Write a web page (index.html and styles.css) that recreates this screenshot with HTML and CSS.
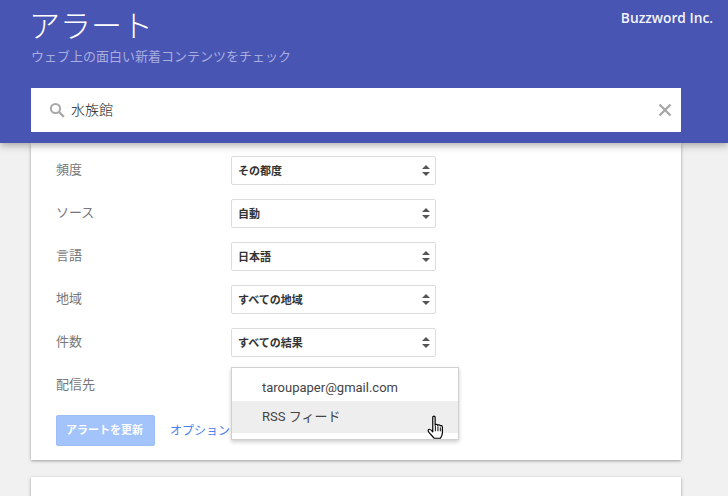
FILE: index.html
```html
<!DOCTYPE html>
<html lang="ja">
<head>
    <meta charset="UTF-8">
    <title>アラート</title>
    <link rel="stylesheet" href="styles.css">
</head>
<body>

    <header class="top-header">
        <div class="brand-row">
            <h1>アラート</h1>
            <span class="company">Buzzword Inc.</span>
        </div>
        <p class="subtitle">ウェブ上の面白い新着コンテンツをチェック</p>

        <div class="search-box">
            <svg class="search-icon" width="16" height="16" viewBox="0 0 16 16">
                <circle cx="6.5" cy="6.5" r="4.6" fill="none" stroke="#a8a8a8" stroke-width="2"/>
                <path d="M10 10l4.8 4.8" stroke="#a8a8a8" stroke-width="2.4" fill="none"/>
            </svg>
            <span class="search-text">水族館</span>
            <svg class="clear-icon" width="14" height="14" viewBox="0 0 14 14">
                <path d="M1.5 1.5l11 11M12.5 1.5l-11 11" stroke="#a8a8a8" stroke-width="2.4" fill="none"/>
            </svg>
        </div>
    </header>

    <main class="main-content">
        <section class="card options-card">
            <div class="form-row">
                <label>頻度</label>
                <div class="select-box">その都度<span class="arrows"></span></div>
            </div>
            <div class="form-row">
                <label>ソース</label>
                <div class="select-box">自動<span class="arrows"></span></div>
            </div>
            <div class="form-row">
                <label>言語</label>
                <div class="select-box">日本語<span class="arrows"></span></div>
            </div>
            <div class="form-row">
                <label>地域</label>
                <div class="select-box">すべての地域<span class="arrows"></span></div>
            </div>
            <div class="form-row">
                <label>件数</label>
                <div class="select-box">すべての結果<span class="arrows"></span></div>
            </div>
            <div class="form-row">
                <label>配信先</label>
                <div class="menu-anchor">
                    <ul class="dropdown-menu">
                        <li>taroupaper@gmail.com</li>
                        <li class="hover">RSS フィード</li>
                    </ul>
                    <!-- hand cursor over the open menu -->
                    <svg class="hand-cursor" width="18" height="24" viewBox="0 0 18 24">
                        <path d="M6 2.2c0-1.5 2.2-1.5 2.2 0v7.2c.3-1 2.2-1 2.4.2.4-.9 2.1-.8 2.3.5.5-.7 2-.5 2 .9v5.6c0 2.300-1 3.400-1.800 4.900H7.300L2.500 16c-1-1.300-1-2.200-.2-2.700.8-.5 1.800 0 3.700 2.300z" fill="#fff" stroke="#000" stroke-width="1.100" stroke-linejoin="round"/>
                        <path d="M8.400 10v5M10.800 10.500v4.500M13 11.500v3.500" stroke="#000" stroke-width="0.900" fill="none"/>
                    </svg>
                </div>
            </div>
            <div class="button-row">
                <button type="button">アラートを更新</button>
                <a href="#">オプションを表示しない</a>
            </div>
        </section>

        <section class="card next-card"></section>
    </main>

</body>
</html>
```

FILE: styles.css
```css
/* Basic Reset & Font */
body, html {
    margin: 0;
    padding: 0;
    height: 100%;
    overflow: hidden;
}

body {
    font-family: Roboto, "Noto Sans CJK JP", sans-serif;
    background-color: #f1f1f1;
    color: #333;
}

/* Header */
.top-header {
    position: relative;
    z-index: 2;
    height: 143px;
    padding: 0 15px 0 31px;
    box-sizing: border-box;
    background-color: #4855b3;
    box-shadow: 0 2px 8px rgba(0, 0, 0, 0.35);
}

.brand-row {
    display: flex;
    justify-content: space-between;
    height: 47px;
}

.top-header h1 {
    margin: 7px 0 0 -2px;
    font-size: 31px;
    line-height: 40px;
    font-weight: 300;
    color: #ffffff;
}

.company {
    margin: 10px 0 0;
    font-family: "Open Sans", sans-serif;
    font-size: 13.75px;
    line-height: 16px;
    font-weight: 600;
    color: #f2f3fb;
}

.subtitle {
    margin: 0;
    font-size: 13px;
    line-height: 20px;
    color: #a9ade0;
}

/* Search box */
.search-box {
    display: flex;
    align-items: center;
    height: 44px;
    margin: 21px 32px 0 0;
    padding: 0 9px 0 18px;
    background-color: #ffffff;
}

.search-text {
    flex-grow: 1;
    margin: -2px 0 0 6px;
    font-size: 14px;
    font-weight: 300;
    color: #222;
}

/* Cards */
.main-content {
    padding: 0 47px 0 31px;
}

.card {
    background-color: #ffffff;
    box-shadow: 0 1px 3px rgba(0, 0, 0, 0.35);
}

.options-card {
    height: 317px;
    padding: 13px 0 0 25px;
    box-sizing: border-box;
}

.next-card {
    height: 40px;
    margin-top: 17px;
}

/* Form rows */
.form-row {
    display: flex;
    height: 29px;
    margin-bottom: 14px;
}

.form-row label {
    width: 175px;
    font-size: 13px;
    line-height: 27px;
    color: #777;
}

.select-box {
    display: flex;
    align-items: center;
    justify-content: space-between;
    width: 205px;
    padding: 0 5px 2px 6px;
    box-sizing: border-box;
    border: 1px solid #dcdcdc;
    border-radius: 2px;
    font-size: 11px;
    font-weight: 700;
    color: #333;
}

/* Up / down arrows of the select */
.arrows {
    position: relative;
    width: 8px;
    height: 11px;
    margin-top: 2px;
}

.arrows::before,
.arrows::after {
    content: "";
    position: absolute;
    left: 0;
    border-left: 4px solid transparent;
    border-right: 4px solid transparent;
}

.arrows::before {
    top: 0;
    border-bottom: 4px solid #555;
}

.arrows::after {
    bottom: 0;
    border-top: 4px solid #555;
}

/* Open dropdown */
.menu-anchor {
    position: relative;
}

.dropdown-menu {
    position: absolute;
    z-index: 3;
    top: -4px;
    left: 0;
    width: 228px;
    height: 73px;
    margin: 0;
    padding: 0;
    box-sizing: border-box;
    list-style: none;
    background-color: #ffffff;
    border: 1px solid #d0d0d0;
    box-shadow: 0 2px 4px rgba(0, 0, 0, 0.2);
}

.dropdown-menu li {
    height: 32px;
    padding-left: 30px;
    font-size: 13px;
    line-height: 32px;
    color: #444;
}

.dropdown-menu li:first-child {
    height: 33px;
    line-height: 40px;
}

.dropdown-menu li.hover {
    background-color: #eeeeee;
}

.hand-cursor {
    position: absolute;
    z-index: 4;
    top: 45px;
    left: 196px;
    transform: scale(1.08);
}

/* Button row */
.button-row {
    display: flex;
    align-items: center;
    margin-top: 15px;
}

.button-row button {
    width: 99px;
    height: 31px;
    padding: 0 2px 3px 0;
    border: 1px solid #9dbdf7;
    border-radius: 2px;
    background-color: #a3c3fb;
    color: #ffffff;
    font-family: inherit;
    font-size: 11px;
    font-weight: 700;
}

.button-row a {
    margin: -3px 0 0 15px;
    font-size: 12px;
    color: #4a80ea;
    text-decoration: none;
}
```
